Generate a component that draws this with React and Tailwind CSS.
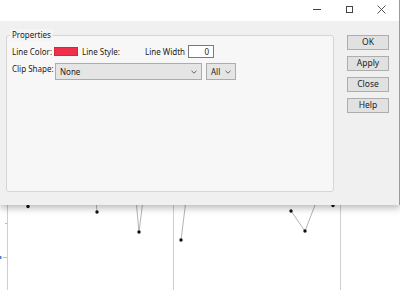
import React from "react";

const font = { fontFamily: '"Noto Sans", "Open Sans", sans-serif' };

function Chevron() {
  return (
    <svg width="6" height="4" viewBox="0 0 6 4" className="block">
      <path d="M0.5 0.8 L3 3.2 L5.5 0.8" fill="none" stroke="#555" strokeWidth="0.9" />
    </svg>
  );
}

function Btn({ children }) {
  return (
    <div className="w-[42px] h-[15px] flex items-center justify-center bg-[#e1e1e1] border border-[#adadad] text-[8.5px] text-[#222] leading-none whitespace-nowrap">
      {children}
    </div>
  );
}

export default function App() {
  return (
    <div className="w-[400px] h-[290px] overflow-hidden bg-white flex flex-col" style={font}>
      {/* Dialog */}
      <div className="relative z-10 w-[400px] h-[205px] shrink-0 flex flex-col border-r border-[#9a9a9a] shadow-[0_3px_7px_rgba(0,0,0,0.28)]">
        {/* title bar */}
        <div className="h-[21px] bg-white flex justify-end items-center pr-[2px]">
          <div className="w-[32px] h-[21px] flex items-center justify-center">
            <div className="w-[8px] h-px bg-[#444] mt-[-2px]" />
          </div>
          <div className="w-[32px] h-[21px] flex items-center justify-center">
            <div className="w-[7px] h-[7px] border border-[#444] mt-[-2px]" />
          </div>
          <div className="w-[32px] h-[21px] flex items-center justify-center">
            <svg width="9" height="9" viewBox="0 0 9 9" className="mt-[-2px]">
              <path d="M0.5 0.5 L8.5 8.5 M8.5 0.5 L0.5 8.5" stroke="#444" strokeWidth="0.9" />
            </svg>
          </div>
        </div>
        {/* body */}
        <div className="flex-1 bg-[#f0f0f0] flex">
          <div className="relative mt-[14px] ml-[6px] w-[328px] h-[157px] border border-[#d6d6d6] rounded-[3px] bg-[#f7f7f7] pl-[5px] pt-[9px] text-[8px] text-[#222] leading-none whitespace-nowrap">
            <span className="absolute left-[3px] top-[-7px] px-[2px] h-[12px] flex items-center bg-[#f4f4f4]">Properties</span>
            {/* row 1 */}
            <div className="flex items-center h-[13px]">
              <span className="w-[42px] shrink-0">Line Color:</span>
              <div className="w-[24px] h-[9px] shrink-0 bg-[#f0304a] border border-[#c92a3c]" />
              <span className="ml-[4px] w-[63px] shrink-0">Line Style:</span>
              <span className="w-[43px] shrink-0">Line Width</span>
              <div className="w-[26px] h-[13px] shrink-0 bg-white border border-[#7a7a7a] flex items-center justify-end pr-[4px]">0</div>
            </div>
            {/* row 2 */}
            <div className="flex items-start mt-[5px]">
              <span className="w-[43px] shrink-0 pt-[2px]">Clip Shape:</span>
              <div className="w-[147px] h-[17px] shrink-0 bg-[#e5e5e5] border border-[#acacac] flex items-center justify-between pl-[4px] pr-[4px]">
                <span className="pt-[1px]">None</span>
                <Chevron />
              </div>
              <div className="ml-[4px] w-[30px] h-[17px] shrink-0 bg-[#e5e5e5] border border-[#acacac] flex items-center justify-between pl-[4px] pr-[4px]">
                <span className="pt-[1px]">All</span>
                <Chevron />
              </div>
            </div>
          </div>
          <div className="ml-[13px] mt-[14px] flex flex-col gap-[6px]">
            <Btn>OK</Btn>
            <Btn>Apply</Btn>
            <Btn>Close</Btn>
            <Btn>Help</Btn>
          </div>
        </div>
      </div>
      {/* chart behind */}
      <div className="flex-1">
        <svg width="400" height="85" viewBox="0 0 400 85" className="block">
          <line x1="7.5" y1="0" x2="7.5" y2="85" stroke="#cfcfcf" />
          <line x1="173.5" y1="0" x2="173.5" y2="85" stroke="#cfcfcf" />
          <line x1="340.5" y1="0" x2="340.5" y2="85" stroke="#cfcfcf" />
          <line x1="5" y1="18.5" x2="7" y2="18.5" stroke="#bbb" />
          <line x1="3" y1="52.5" x2="7" y2="52.5" stroke="#bbb" />
          <rect x="0" y="51" width="1.5" height="3" fill="#5b7fc7" />
          <g stroke="#a0a0a0" strokeWidth="0.8" fill="none">
            <polyline points="96,-5 97,7" />
            <polyline points="136,-5 139,27 143,-5" />
            <polyline points="186,-5 181,35" />
            <polyline points="291,6 305,26 317,-5" />
          </g>
          <g fill="#111">
            <circle cx="28" cy="1.5" r="1.7" />
            <circle cx="97" cy="7" r="1.7" />
            <circle cx="139" cy="27" r="1.7" />
            <circle cx="181" cy="35" r="1.7" />
            <circle cx="291" cy="6" r="1.7" />
            <circle cx="305" cy="26" r="1.7" />
            <circle cx="333" cy="0.5" r="1.7" />
          </g>
        </svg>
      </div>
    </div>
  );
}
